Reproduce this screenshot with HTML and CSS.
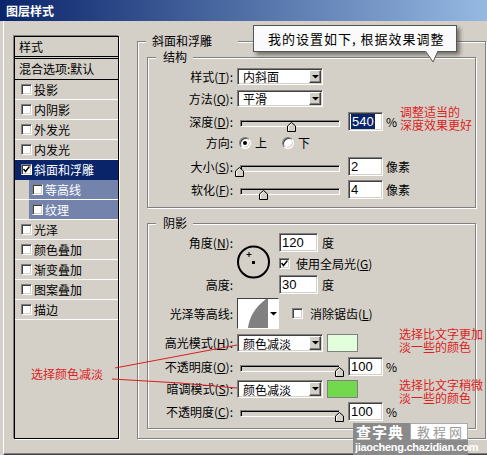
FILE: index.html
```html
<!DOCTYPE html>
<html lang="zh-CN">
<head>
<meta charset="utf-8">
<title>图层样式</title>
<link rel="stylesheet" href="styles.css">
</head>
<body>
<div class="window">
  <div class="titlebar">图层样式</div>
  <div class="panel">
    <div class="stylelist">
      <div class="li head">样式</div>
      <div class="li blend">混合选项:默认</div>
      <div class="li"><span class="cb"></span>投影</div>
      <div class="li"><span class="cb"></span>内阴影</div>
      <div class="li"><span class="cb"></span>外发光</div>
      <div class="li"><span class="cb"></span>内发光</div>
      <div class="li sel"><span class="cb"><svg class="tick" width="7" height="7" viewBox="0 0 7 7"><path d="M0.5 3 L2.5 5.5 L6.5 0.5" fill="none" stroke="#000" stroke-width="1.5"/></svg></span>斜面和浮雕</div>
      <div class="li sub"><div class="subin"><span class="cb"></span>等高线</div></div>
      <div class="li sub"><div class="subin"><span class="cb"></span>纹理</div></div>
      <div class="li"><span class="cb"></span>光泽</div>
      <div class="li"><span class="cb"></span>颜色叠加</div>
      <div class="li"><span class="cb"></span>渐变叠加</div>
      <div class="li"><span class="cb"></span>图案叠加</div>
      <div class="li"><span class="cb"></span>描边</div>
    </div>

    <div class="group outer">
      <span class="legend legend-outer">斜面和浮雕</span>

      <div class="group struct">
        <span class="legend">结构</span>
        <div class="row row-sel mb5">
          <span class="lbl">样式(<u>T</u>):</span>
          <div class="select"><span class="val">内斜面</span><span class="btn"><svg width="7" height="4" viewBox="0 0 7 4"><polygon points="0,0 7,0 3.5,3.5" fill="#000"/></svg></span></div>
        </div>
        <div class="row row-sel mb5">
          <span class="lbl">方法(<u>Q</u>):</span>
          <div class="select"><span class="val">平滑</span><span class="btn"><svg width="7" height="4" viewBox="0 0 7 4"><polygon points="0,0 7,0 3.5,3.5" fill="#000"/></svg></span></div>
        </div>
        <div class="row row-num mb3">
          <span class="lbl">深度(<u>D</u>):</span>
          <div class="slider"><div class="track"></div><svg class="thumb" style="left:50px" width="9" height="10" viewBox="0 0 9 10"><path d="M0.5 9.5 V4 L4.5 0.5 L8.5 4 V9.5 Z" fill="#d4d0c8" stroke="#000"/><path d="M1.5 8.5 V4.4 L4.5 1.8" fill="none" stroke="#fff"/></svg></div>
          <div class="num"><span class="hl">540</span></div>
          <span class="unit">%</span>
        </div>
        <div class="row row-dir mb5">
          <span class="lbl">方向:</span>
          <span class="radio on"></span><span class="rtext">上</span>
          <span class="radio second"></span><span class="rtext">下</span>
        </div>
        <div class="row row-num mb4">
          <span class="lbl">大小(<u>S</u>):</span>
          <div class="slider"><div class="track"></div><svg class="thumb" style="left:-2px" width="9" height="10" viewBox="0 0 9 10"><path d="M0.5 9.5 V4 L4.5 0.5 L8.5 4 V9.5 Z" fill="#d4d0c8" stroke="#000"/><path d="M1.5 8.5 V4.4 L4.5 1.8" fill="none" stroke="#fff"/></svg></div>
          <div class="num">2</div>
          <span class="unit">像素</span>
        </div>
        <div class="row row-num">
          <span class="lbl">软化(<u>F</u>):</span>
          <div class="slider"><div class="track"></div><svg class="thumb" style="left:22px" width="9" height="10" viewBox="0 0 9 10"><path d="M0.5 9.5 V4 L4.5 0.5 L8.5 4 V9.5 Z" fill="#d4d0c8" stroke="#000"/><path d="M1.5 8.5 V4.4 L4.5 1.8" fill="none" stroke="#fff"/></svg></div>
          <div class="num">4</div>
          <span class="unit">像素</span>
        </div>
      </div>

      <div class="group shadow">
        <span class="legend">阴影</span>
        <div class="angle">
          <div class="acol alabels">
            <div class="s19">角度(<u>N</u>):</div>
            <div class="s23"></div>
            <div class="s19">高度:</div>
          </div>
          <svg class="dial" width="33" height="34" viewBox="0 0 33 34">
            <circle cx="16.5" cy="17" r="15.5" fill="none" stroke="#000" stroke-width="2"/>
            <rect x="15" y="16" width="3" height="3" fill="#000"/>
            <path d="M9.5 9.5 H14.5 M12 7 V12" stroke="#000" stroke-width="1"/>
          </svg>
          <div class="acol acontrols">
            <div class="s19"><div class="num wide">120</div><span class="unit deg">度</span></div>
            <div class="s23"><span class="cb"><svg class="tick" width="7" height="7" viewBox="0 0 7 7"><path d="M0.5 3 L2.5 5.5 L6.5 0.5" fill="none" stroke="#000" stroke-width="1.5"/></svg></span><span class="cbtext">使用全局光(<u>G</u>)</span></div>
            <div class="s19"><div class="num wide">30</div><span class="unit deg">度</span></div>
          </div>
        </div>
        <div class="row row-contour">
          <span class="lbl">光泽等高线:</span>
          <div class="contour">
            <svg width="30" height="29" viewBox="0 0 30 29"><path d="M10 29 C11 19 17 8 28 0 L30 0 L30 29 Z" fill="#808080"/></svg>
            <span class="carrow"><svg width="7" height="4" viewBox="0 0 7 4"><polygon points="0,0 7,0 3.5,3.5" fill="#000"/></svg></span>
          </div>
          <span class="cb aa"></span><span class="cbtext aatext">消除锯齿(<u>L</u>)</span>
        </div>
        <div class="row row-mode mt5">
          <span class="lbl">高光模式(<u>H</u>):</span>
          <div class="select tall"><span class="val">颜色减淡</span><span class="btn"><svg width="7" height="4" viewBox="0 0 7 4"><polygon points="0,0 7,0 3.5,3.5" fill="#000"/></svg></span></div>
          <span class="swatch light"></span>
        </div>
        <div class="row row-num mt5">
          <span class="lbl">不透明度(<u>O</u>):</span>
          <div class="slider"><div class="track"></div><svg class="thumb" style="left:98px" width="9" height="10" viewBox="0 0 9 10"><path d="M0.5 9.5 V4 L4.5 0.5 L8.5 4 V9.5 Z" fill="#d4d0c8" stroke="#000"/><path d="M1.5 8.5 V4.4 L4.5 1.8" fill="none" stroke="#fff"/></svg></div>
          <div class="num">100</div>
          <span class="unit">%</span>
        </div>
        <div class="row row-mode mt4">
          <span class="lbl">暗调模式(<u>S</u>):</span>
          <div class="select tall"><span class="val">颜色减淡</span><span class="btn"><svg width="7" height="4" viewBox="0 0 7 4"><polygon points="0,0 7,0 3.5,3.5" fill="#000"/></svg></span></div>
          <span class="swatch green"></span>
        </div>
        <div class="row row-num mt4">
          <span class="lbl">不透明度(<u>C</u>):</span>
          <div class="slider"><div class="track"></div><svg class="thumb" style="left:98px" width="9" height="10" viewBox="0 0 9 10"><path d="M0.5 9.5 V4 L4.5 0.5 L8.5 4 V9.5 Z" fill="#d4d0c8" stroke="#000"/><path d="M1.5 8.5 V4.4 L4.5 1.8" fill="none" stroke="#fff"/></svg></div>
          <div class="num">100</div>
          <span class="unit">%</span>
        </div>
      </div>
    </div>
  </div>

  <div class="tip">我的设置如下, 根据效果调整<svg class="tip-ptr" width="16" height="13" viewBox="0 0 16 13"><polygon points="0,0 13,0 8,11" fill="#fafafa"/><path d="M0.5 0 L8 11 L13 0" fill="none" stroke="#555"/></svg></div>

  <div class="note note-depth"><div class="nl">调整适当的</div><div class="nl">深度效果更好</div></div>
  <div class="note note-hi"><div class="nl">选择比文字更加</div><div class="nl">淡一些的颜色</div></div>
  <div class="note note-lo"><div class="nl">选择比文字稍微</div><div class="nl">淡一些的颜色</div></div>
  <div class="note note-left"><div class="nl">选择颜色减淡</div></div>
  <svg class="lines" width="487" height="455" viewBox="0 0 487 455"><polyline points="115,368 237,345" fill="none" stroke="#d42020"/><polyline points="112,379 180,383 237,388" fill="none" stroke="#d42020"/></svg>

  <div class="wm">
    <div class="wm-top"><span class="wm-a">查字典</span><span class="wm-b">教程网</span></div>
    <div class="wm-bot">jiaocheng.chazidian.com</div>
  </div>
</div>
</body>
</html>
```
FILE: styles.css
```css
* { box-sizing: border-box; }
html, body { margin: 0; padding: 0; }
body {
  width: 487px; height: 455px; overflow: hidden;
  background: #d4d0c8; color: #000;
  font-family: "Noto Sans CJK SC", sans-serif;
  font-size: 12px; line-height: 14px;
}
u { text-decoration: underline; text-underline-offset: 1px; }
.window { position: relative; width: 487px; height: 455px; }

.titlebar {
  height: 21px; padding-left: 6px;
  background: linear-gradient(90deg, #0a246a 0%, #96b9e2 100%);
  color: #fff; font-weight: bold; font-size: 12px; line-height: 21px;
}
.panel {
  margin-left: 3px; height: 434px;
  border-left: 1px solid #fff; border-bottom: 1px solid #404040;
  box-shadow: inset 0 -1px 0 #808080;
  display: flex; align-items: flex-start; padding-left: 10px;
}

/* style list */
.stylelist {
  flex: none; margin-top: 15px; width: 105px; height: 403px;
  border: 1px solid #000;
  box-shadow: -1px -1px 0 #808080, 1px 1px 0 #fff;
}
.li {
  height: 20px; border-bottom: 1px solid #fff;
  display: flex; align-items: center; padding-left: 6px; white-space: nowrap;
}
.li.head { height: 22px; border-bottom: 3px double #000; padding-left: 4px; }
.li.blend { height: 21px; border-bottom-color: #000; padding-left: 4px; }
.li > .cb, .subin > .cb { margin-right: 2px; }
.li.sel { background: #0a246a; color: #fff; border-bottom-color: #0a246a; }
.li.sub { padding-left: 14px; }
.subin {
  flex: 1; height: 19px; background: #7383ab; color: #fff;
  display: flex; align-items: center; padding-left: 3px;
}

.cb {
  flex: none; position: relative; width: 11px; height: 11px; background: #fff;
  border: 1px solid; border-color: #808080 #fff #fff #808080;
  box-shadow: inset 1px 1px 0 #404040, inset -1px -1px 0 #d4d0c8;
}
.tick { position: absolute; left: 1px; top: 1px; }

/* group boxes */
.group {
  position: relative; flex: none;
  border: 1px solid #808080;
  box-shadow: inset 1px 1px 0 #fff, 1px 1px 0 #fff;
}
.legend {
  position: absolute; top: -8px; left: 8px;
  background: #d4d0c8; line-height: 14px; padding: 0 6px 0 7px; white-space: nowrap;
}
.outer { margin-top: 20px; margin-left: 18px; width: 349px; height: 398px; padding: 15px 9px 9px 9px; }
.legend-outer { padding: 0 26px 0 6px; }
.struct { width: 329px; height: 151px; padding-top: 10px; }
.shadow { width: 329px; height: 206px; margin-top: 15px; padding-top: 9px; }

.row { display: flex; align-items: center; white-space: nowrap; }
.lbl { flex: none; width: 85px; margin-right: 4px; text-align: right; }
.mb3 { margin-bottom: 3px; } .mb4 { margin-bottom: 4px; } .mb5 { margin-bottom: 5px; }
.mt4 { margin-top: 4px; } .mt5 { margin-top: 5px; }
.row-sel { height: 17px; }
.row-num { height: 19px; }
.row-dir { height: 18px; }
.row-mode { height: 18px; }
.row-contour { height: 31px; margin-top: 4px; }

/* dropdown */
.select {
  flex: none; width: 86px; height: 17px; padding: 1px;
  display: flex; align-items: center; background: #fff;
  border: 1px solid; border-color: #808080 #fff #fff #808080;
  box-shadow: inset 1px 1px 0 #404040, inset -1px -1px 0 #d4d0c8;
}
.select.tall { height: 18px; }
.select .val { flex: 1; padding-left: 4px; line-height: 13px; }
.select .btn {
  flex: none; width: 12px; height: 100%;
  background: #d4d0c8; display: flex; align-items: center; justify-content: center;
  border: 1px solid; border-color: #fff #404040 #404040 #fff;
  box-shadow: inset -1px -1px 0 #808080;
}
.select .btn svg { display: block; }

/* slider */
.slider { position: relative; flex: none; width: 108px; height: 19px; }
.track {
  position: absolute; left: 3px; top: 8px; width: 100px; height: 7px;
  border: 1px solid; border-color: #808080 #fff #fff #808080;
  box-shadow: inset 1px 1px 0 #000, inset -1px -1px 0 #d4d0c8;
  background: #d4d0c8;
}
.thumb { position: absolute; top: 10px; display: block; }

/* number field */
.num {
  flex: none; width: 35px; height: 19px; margin-left: 3px; padding-left: 2px;
  background: #fff; border: 1px solid; border-color: #808080 #fff #fff #808080;
  box-shadow: inset 1px 1px 0 #404040, inset -1px -1px 0 #d4d0c8;
  font-family: "Liberation Sans", sans-serif; font-size: 13px; line-height: 17px;
}
.num.wide { width: 39px; margin-left: 0; }
.hl { background: #0a246a; color: #fff; padding: 0 1px; }
.unit { margin-left: 3px; }
.unit.deg { margin-left: 4px; }

/* radio */
.radio {
  flex: none; position: relative; width: 12px; height: 12px; border-radius: 50%;
  background: #fff; border: 1px solid; border-color: #808080 #fff #fff #808080;
  box-shadow: inset 1px 1px 0 #404040, inset -1px -1px 0 #d4d0c8;
  margin-left: 2px;
}
.radio.on::after {
  content: ""; position: absolute; left: 3px; top: 3px;
  width: 4px; height: 4px; border-radius: 50%; background: #000;
}
.radio.second { margin-left: 15px; }
.rtext { margin-left: 4px; }

/* angle block */
.angle { display: flex; height: 61px; }
.acol { display: flex; flex-direction: column; flex: none; }
.acol > div { display: flex; align-items: center; white-space: nowrap; }
.alabels { width: 85px; margin-right: 4px; }
.alabels > div { justify-content: flex-end; }
.s19 { height: 19px; }
.s23 { height: 23px; }
.dial { flex: none; margin-top: 12px; display: block; }
.acontrols { margin-left: 9px; }
.cbtext { margin-left: 6px; }

/* contour */
.contour {
  flex: none; display: flex; width: 42px; height: 31px; background: #fff;
  border: 1px solid; border-color: #404040 #fff #fff #404040;
}
.contour svg { display: block; }
.carrow { flex: 1; display: flex; align-items: center; justify-content: center; }
.cb.aa { margin-left: 13px; }
.aatext { margin-left: 7px; }

.swatch { flex: none; width: 31px; height: 18px; margin-left: 4px; border: 1px solid #808080; }
.swatch.light { background: #e2fedb; }
.swatch.green { background: #72d94f; }

/* overlays */
.tip {
  position: absolute; left: 253px; top: 25px; width: 204px; height: 27px;
  background: #fafafa; border: 1px solid #555;
  box-shadow: 3px 3px 4px rgba(0, 0, 0, 0.45);
  font-size: 13px; line-height: 25px; padding-left: 14px; letter-spacing: 1px; white-space: nowrap;
}
.tip-ptr { position: absolute; left: 171px; top: 25px; display: block; }
.note { position: absolute; color: #dc1e1e; font-size: 12px; white-space: nowrap; }
.note .nl { height: 13px; line-height: 13px; }
.note-depth { left: 400px; top: 105px; }
.note-hi { left: 399px; top: 327px; }
.note-lo { left: 399px; top: 378px; }
.note-left { left: 31px; top: 367px; }
.lines { position: absolute; left: 0; top: 0; pointer-events: none; }

.wm { position: absolute; left: 353px; top: 423px; width: 115px; }
.wm-top { display: flex; height: 17px; }
.wm-a {
  width: 57px; background: #8a8a8a; color: #fff; font-weight: bold;
  font-size: 15px; line-height: 17px; padding-left: 3px; letter-spacing: 1px;
}
.wm-b {
  flex: 1; background: #fff; color: #999; border: 1px solid #aaa;
  font-size: 13px; line-height: 15px; padding-left: 6px; letter-spacing: 3px;
}
.wm-bot {
  height: 15px; background: #8a8a8a; color: #fff; font-weight: bold;
  font-family: "Liberation Sans", sans-serif; font-size: 11px; line-height: 15px;
  padding-left: 2px; letter-spacing: -0.3px;
}
```
